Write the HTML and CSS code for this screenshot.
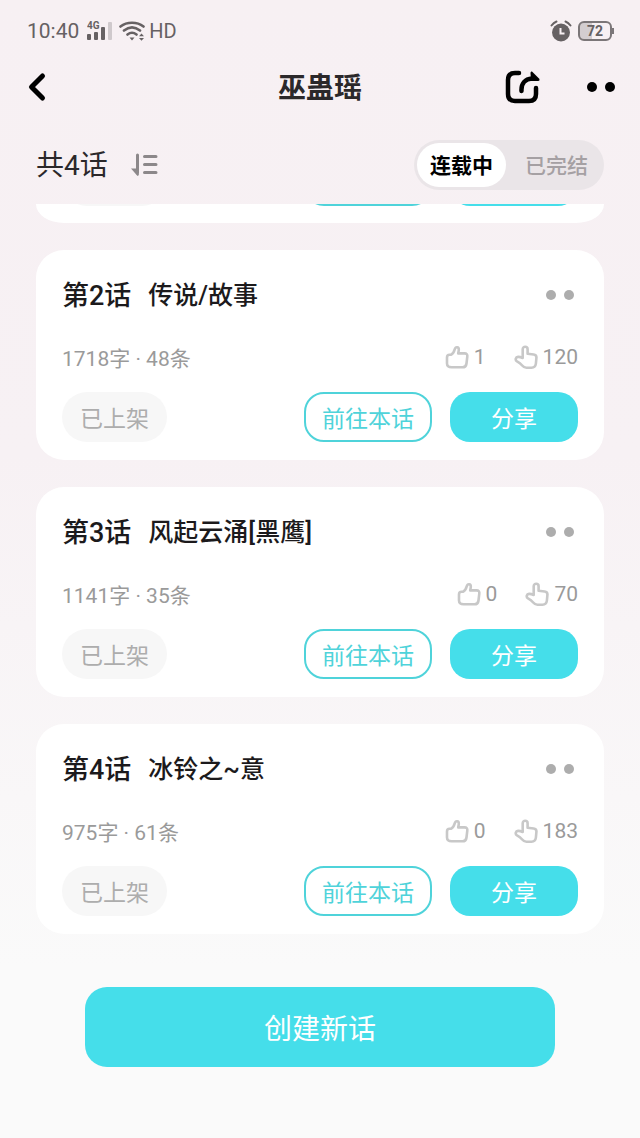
FILE: index.html
```html
<!DOCTYPE html>
<html lang="zh-CN">
<head>
<meta charset="utf-8">
<meta name="viewport" content="width=device-width, initial-scale=1">
<title>巫蛊瑶</title>
<link rel="stylesheet" href="styles.css">
</head>
<body>
<svg class="sprite" aria-hidden="true">
  <symbol id="thumb" viewBox="0 0 24 24"><path d="M4.500 9.800H6C8 9 9 7 9.800 4.200C10.600 1.200 13.900 1.800 13.800 4.500C13.700 6.300 13.400 7.400 13.200 8.400H19.500C21.700 8.400 22.600 9.600 22.300 11.600L21.500 18.500C21.200 21 19.700 22.300 17.500 22.300H6.500C3.500 22.300 2 21 2 18.500V12.500C2 10.700 2.800 9.800 4.500 9.800Z"/></symbol>
  <symbol id="finger" viewBox="0 0 24 24"><path d="M8.700 13V4.200C8.700 .9 13.600 .9 13.600 4.200V8.800L19.700 9.500C21.800 9.800 22.600 11 22.400 13L21.900 18.500C21.600 21.300 20 22.700 17.500 22.700H12.500C10.500 22.700 9.400 22 8.200 20.500C6.500 18.300 5 17.300 3 16.300C.8 15 1.700 12 4 11.900C6 11.800 7.200 12.300 8.700 13Z"/></symbol>
</svg>
<div class="app">
  <div class="status">
    <div class="status-group">
      <span class="clock">10:40</span>
      <svg class="signal" viewBox="0 0 26 20" aria-label="4G" role="img">
        <text x="0" y="8" class="net">4G</text>
        <rect x="0" y="13" width="4" height="6" rx="1"/><rect x="7" y="11" width="4" height="8" rx="1"/><rect x="14" y="6" width="4" height="13" rx="1"/><rect class="faint" x="21" y="1" width="4" height="18" rx="1"/>
      </svg>
      <svg class="wifi" viewBox="0 0 26 20" aria-hidden="true">
        <path class="arc" d="M1.500 5.500C8 .5 18 .5 24.500 5.500M5 9.500C10 5.500 16 5.500 21 9.500M8.500 13.500C11.300 11.300 14.700 11.300 17.500 13.500"/>
        <path d="M10.500 16.500H15.500L13 19.500ZM20 15.300L22.500 12.500L25 15.300ZM20 17H25L22.500 19.800Z"/>
      </svg>
      <span class="hd">HD</span>
    </div>
    <div class="status-group">
      <svg class="alarm" viewBox="0 0 22 22" aria-hidden="true">
        <circle cx="11" cy="12.500" r="9"/><path class="ring" d="M1.500 5.500C3 3.500 4.500 2.300 6.500 1.500M15.500 1.500C17.500 2.300 19 3.500 20.500 5.500"/><path class="hands" d="M10.500 8V13.500H14.500"/>
      </svg>
      <span class="battery">72</span>
    </div>
  </div>

  <header class="nav">
    <button class="icon-btn" aria-label="返回"><svg width="24" height="30" viewBox="0 0 24 30"><path class="stroke5" d="M17.500 4L6.500 15L17.500 26"/></svg></button>
    <h1 class="nav-title">巫蛊瑶</h1>
    <div class="nav-actions">
      <button class="icon-btn" aria-label="分享"><svg width="36" height="36" viewBox="0 0 36 36"><path class="stroke4" d="M14 4H10Q3 4 3 11V25Q3 32 10 32H24Q31 32 31 25V19M16.500 22C16 14.500 20 10 27 9.500"/><path d="M27 2.500Q25.500 2 25.500 4L26 12L33 12Q35.500 11.500 34 9.500Z"/></svg></button>
      <button class="icon-btn dots dots-nav" aria-label="更多"><i></i><i></i></button>
    </div>
  </header>

  <section class="filter">
    <h2 class="count">共4话</h2>
    <button class="icon-btn sort" aria-label="排序"><svg width="28" height="24" viewBox="0 0 28 24"><path class="stroke3" d="M7.500 2V20M14.500 3.500H26M14.500 11.500H26M14.500 19.500H26"/><path d="M1 15.500H6L9 22L7.500 23Z"/></svg></button>
    <div class="toggle">
      <button class="tab tab-on" aria-pressed="true">连载中</button>
      <button class="tab" aria-pressed="false">已完结</button>
    </div>
  </section>

  <main class="list">
    <div class="peek" aria-hidden="true">
      <div class="peek-strip">
        <span class="edge edge-tag"></span><span class="edge edge-line"></span><span class="edge edge-fill"></span>
      </div>
    </div>

    <article class="card">
      <div class="row head"><h3 class="no">第2话</h3><span class="name">传说/故事</span><button class="icon-btn dots" aria-label="更多"><i></i><i></i></button></div>
      <div class="row meta"><span>1718字 · 48条</span><span class="stats"><span class="stat"><svg class="hand"><use href="#thumb"/></svg>1</span><span class="stat"><svg class="hand"><use href="#finger"/></svg>120</span></span></div>
      <div class="row actions"><span class="tag">已上架</span><button class="btn btn-line">前往本话</button><button class="btn btn-fill">分享</button></div>
    </article>

    <article class="card">
      <div class="row head"><h3 class="no">第3话</h3><span class="name">风起云涌[黑鹰]</span><button class="icon-btn dots" aria-label="更多"><i></i><i></i></button></div>
      <div class="row meta"><span>1141字 · 35条</span><span class="stats"><span class="stat"><svg class="hand"><use href="#thumb"/></svg>0</span><span class="stat"><svg class="hand"><use href="#finger"/></svg>70</span></span></div>
      <div class="row actions"><span class="tag">已上架</span><button class="btn btn-line">前往本话</button><button class="btn btn-fill">分享</button></div>
    </article>

    <article class="card">
      <div class="row head"><h3 class="no">第4话</h3><span class="name">冰铃之~意</span><button class="icon-btn dots" aria-label="更多"><i></i><i></i></button></div>
      <div class="row meta"><span>975字 · 61条</span><span class="stats"><span class="stat"><svg class="hand"><use href="#thumb"/></svg>0</span><span class="stat"><svg class="hand"><use href="#finger"/></svg>183</span></span></div>
      <div class="row actions"><span class="tag">已上架</span><button class="btn btn-line">前往本话</button><button class="btn btn-fill">分享</button></div>
    </article>
  </main>

  <footer class="foot"><button class="create">创建新话</button></footer>
</div>
</body>
</html>
```
FILE: styles.css
```css
* { box-sizing: border-box; }

body {
  margin: 0;
  font-family: Roboto, "Noto Sans CJK SC", sans-serif;
  color: #1c1a1c;
  background: #fafafa;
}

.sprite { position: absolute; width: 0; height: 0; }

.app {
  min-height: 100vh;
  background: linear-gradient(#f7f0f3, #f7f1f4 40%, #fafafa 85%);
}

h1, h2, h3 { margin: 0; }

button {
  margin: 0;
  padding: 0;
  border: 0;
  background: none;
  font: inherit;
  color: inherit;
}

.icon-btn { display: flex; align-items: center; }

/* status bar */
.status {
  display: flex;
  justify-content: space-between;
  align-items: center;
  height: 60px;
  padding: 2px 28px 0 27px;
  color: #666163;
}
.status-group { display: flex; align-items: center; gap: 6px; }
.status svg { fill: #666163; }
.clock { font-size: 21px; }
.hd { font-size: 20px; margin-left: -2px; }
.signal { width: 26px; height: 20px; margin-left: 2px; }
.net { font-size: 10px; font-weight: 700; }
.signal .faint { fill: #cfc9cc; }
.wifi { width: 26px; height: 20px; }
.wifi .arc { fill: none; stroke: #666163; stroke-width: 2.6; stroke-linecap: round; }
.alarm { width: 22px; height: 22px; }
.alarm .ring { fill: none; stroke: #666163; stroke-width: 2; stroke-linecap: round; }
.alarm .hands { fill: none; stroke: #f7f0f3; stroke-width: 2; }
.battery {
  position: relative;
  width: 34px;
  height: 20px;
  border: 2px solid #7b7678;
  border-radius: 6px;
  background: linear-gradient(90deg, #d3cdd0 40%, #f7f0f3 40%);
  font-size: 14px;
  font-weight: 700;
  line-height: 16px;
  text-align: center;
}
.battery::after {
  content: "";
  position: absolute;
  right: -4px;
  top: 5px;
  width: 2px;
  height: 6px;
  background: #7b7678;
}

/* navigation */
.nav {
  display: grid;
  grid-template-columns: 1fr auto 1fr;
  align-items: center;
  height: 54px;
  padding: 0 25px;
}
.nav-title { padding-top: 3px; font-size: 28px; line-height: 40px; font-weight: 700; color: #2b282a; }
.nav-actions { display: flex; justify-content: flex-end; gap: 46px; }
.stroke3, .stroke4, .stroke5 { fill: none; stroke-linecap: round; stroke-linejoin: round; }
.stroke5 { stroke: #000; stroke-width: 5; }
.stroke4 { stroke: #000; stroke-width: 4.5; }
.stroke3 { stroke: #8c888a; stroke-width: 3; }

.dots { gap: 8px; margin-left: auto; padding-right: 4px; color: #adadad; }
.dots i { width: 10px; height: 10px; border-radius: 50%; background: currentColor; }
.dots-nav { margin: 0; padding: 0; color: #000; }

/* filter */
.filter {
  display: flex;
  align-items: center;
  height: 90px;
  padding: 12px 36px 0;
}
.count { padding-top: 2px; font-size: 28px; line-height: 40px; font-weight: 400; color: #2b282a; }
.sort { margin-left: 22px; }
.sort svg { fill: #8c888a; }
.toggle {
  display: flex;
  gap: 6px;
  height: 50px;
  margin-left: auto;
  padding: 3px;
  border-radius: 25px;
  background: #eae5e8;
}
.tab {
  padding: 0 13px 2px;
  border-radius: 22px;
  font-size: 21px;
  font-weight: 500;
  color: #a5a0a3;
}
.tab-on { background: #fff; color: #000; font-weight: 700; }

/* chapter list */
.list {
  display: flex;
  flex-direction: column;
  gap: 27px;
  padding: 0 36px;
}
.peek {
  height: 19px;
  padding: 0 26px;
  border-radius: 0 0 28px 28px / 0 0 19px 19px;
  background: #fff;
}
.peek-strip { display: flex; align-items: flex-end; height: 2px; overflow: hidden; }
.edge { flex: none; width: 128px; height: 50px; border-radius: 20px; }
.edge-tag { width: 105px; border-radius: 25px; margin-right: auto; background: #f7f7f7; }
.edge-line { border: 2px solid #4fd3da; margin-right: 18px; }
.edge-fill { background: #45deea; }

.card {
  padding: 24px 26px 18px;
  border-radius: 28px;
  background: #fff;
}
.row { display: flex; align-items: center; }
.head { height: 42px; }
.no, .name { padding-top: 2px; line-height: 40px; font-weight: 500; }
.no { font-size: 27px; }
.name { margin-left: 17px; font-size: 25px; }
.meta {
  justify-content: space-between;
  height: 30px;
  margin: 26px 0 20px;
  font-size: 21px;
  font-weight: 400;
  color: #9a9a9a;
}
.stats { display: flex; gap: 28px; }
.stat { display: flex; align-items: center; gap: 5px; }
.hand {
  width: 24px;
  height: 24px;
  fill: none;
  stroke: #c8c8c8;
  stroke-width: 2.6;
  stroke-linejoin: round;
}
.actions { gap: 18px; }
.tag, .btn {
  display: flex;
  align-items: center;
  justify-content: center;
  height: 50px;
  font-size: 23px;
  font-weight: 400;
}
.tag {
  margin-right: auto;
  padding: 0 18px;
  border-radius: 25px;
  background: #f7f7f7;
  color: #adadad;
}
.btn { width: 128px; border-radius: 20px; }
.btn-line { border: 2px solid #4fd3da; color: #4fd3da; }
.btn-fill { background: #45deea; color: #fff; }

/* footer */
.foot { padding: 53px 85px 71px; }
.create {
  width: 100%;
  height: 80px;
  border-radius: 22px;
  background: #45deea;
  color: #fff;
  font-size: 28px;
  font-weight: 400;
}
```
